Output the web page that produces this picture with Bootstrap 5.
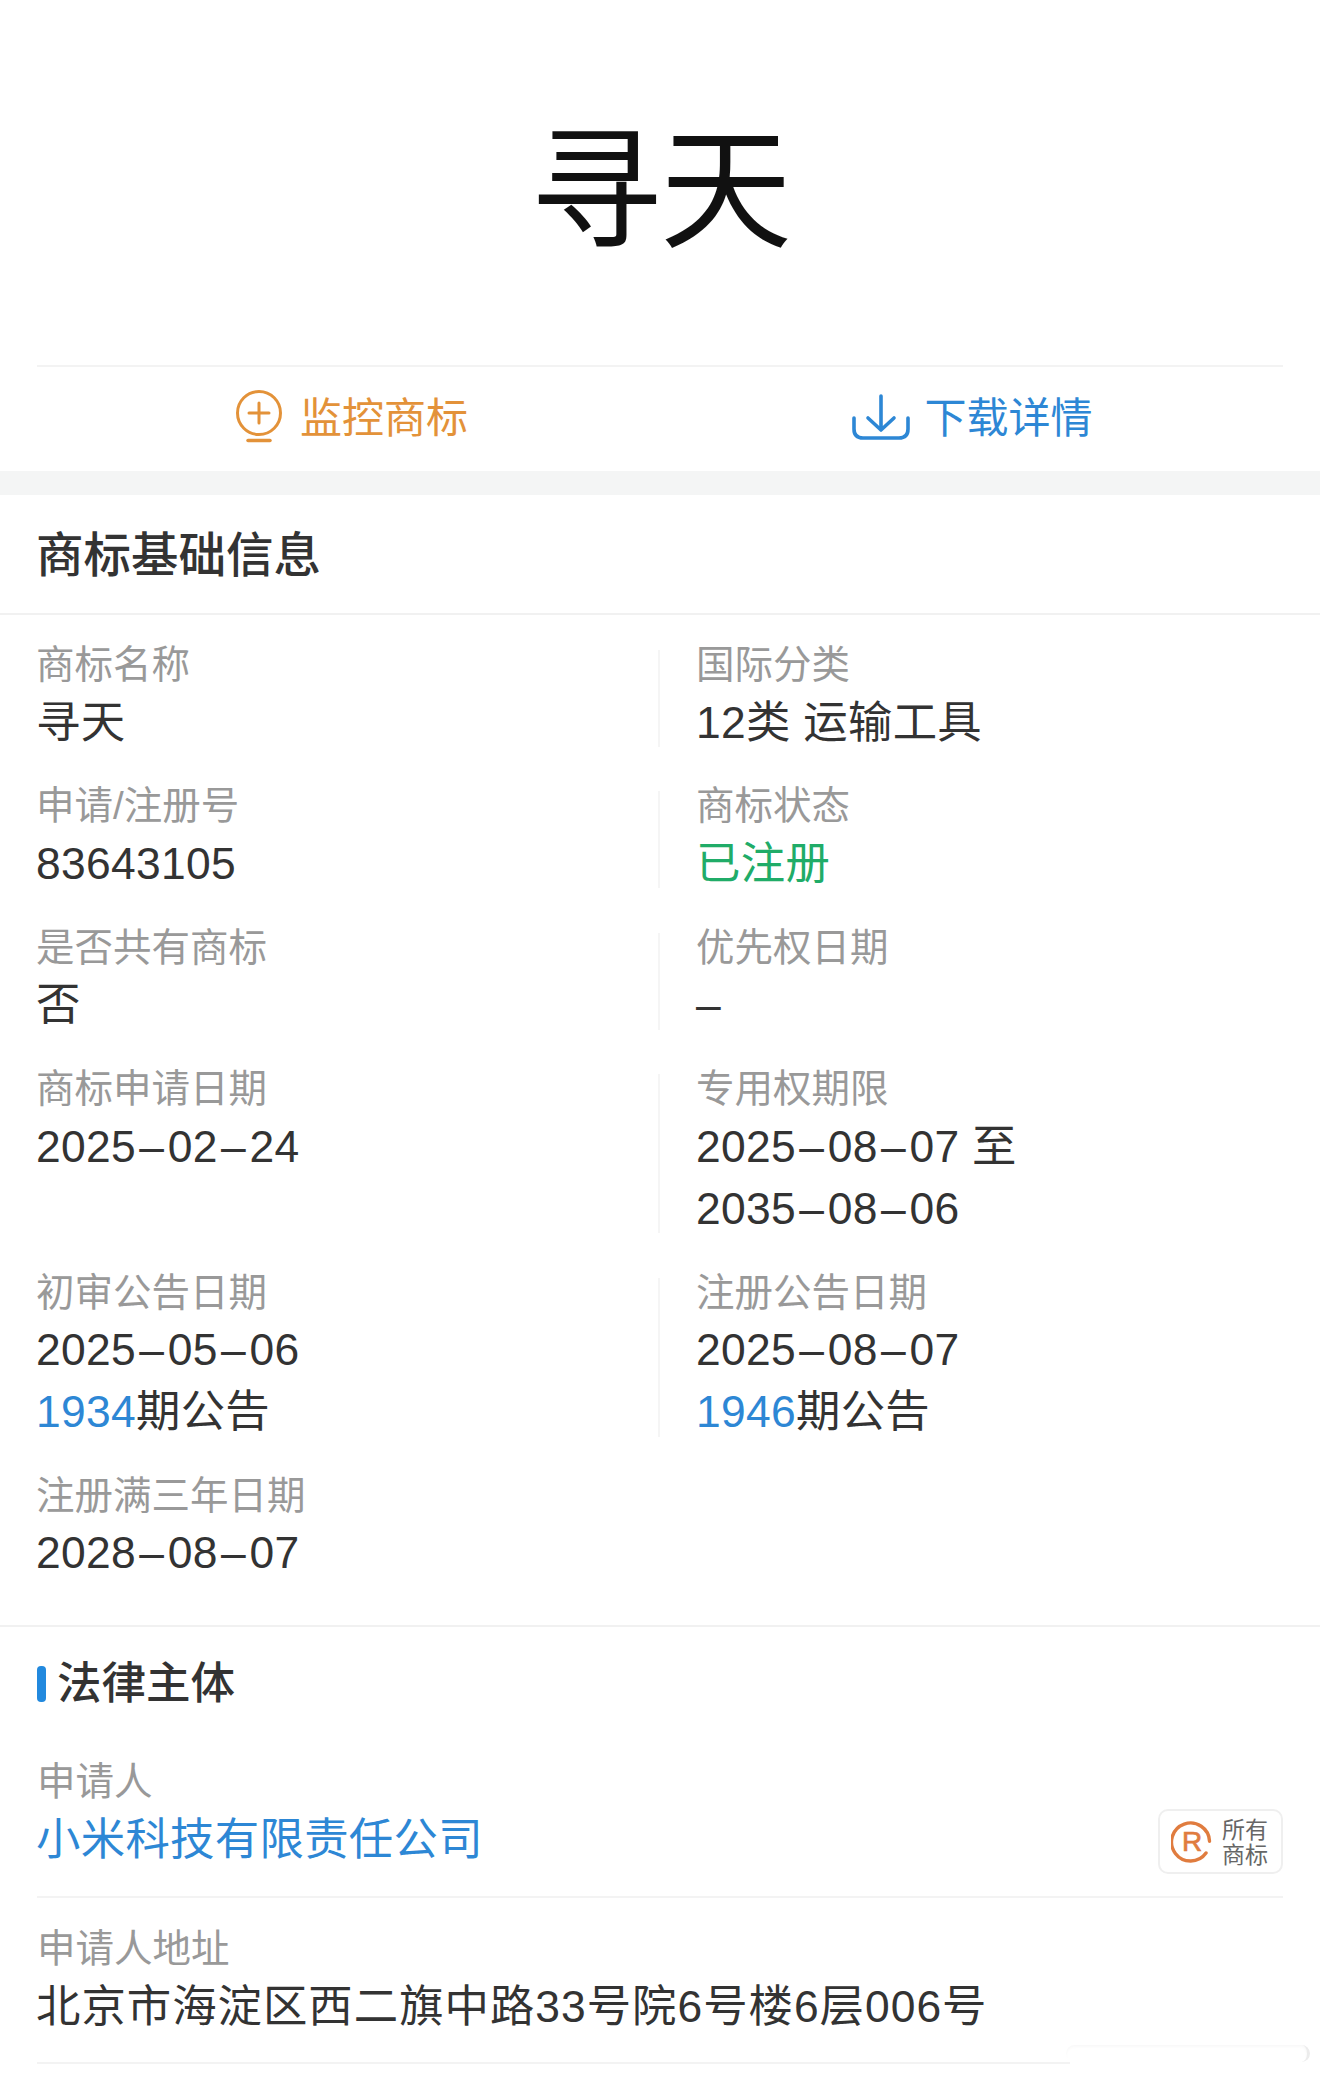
<!DOCTYPE html>
<html lang="zh-CN">
<head>
<meta charset="utf-8">
<title>商标详情</title>
<link href="https://cdn.jsdelivr.net/npm/bootstrap@5.3.0/dist/css/bootstrap.min.css" rel="stylesheet">
<style>
html,body{background:#fff;margin:0;}
body{width:1320px;height:2080px;overflow:hidden;position:relative;font-family:"Liberation Sans","Noto Sans CJK SC",sans-serif;color:#333;}
.hero{height:365px;padding-bottom:6px;}
.hero-title{font-family:"Noto Sans CJK SC",sans-serif;font-size:132px;line-height:1;font-weight:400;color:#111;letter-spacing:-2px;margin:0;}
.pad{margin-left:37px;margin-right:37px;}
.actions{height:106px;border-top:2px solid #f3f3f3;}
.action{font-size:42px;line-height:1;gap:17px;}
.action svg{margin-bottom:4px;}
.action-l{padding-left:6px;}
.action-r{padding-left:2px;}
.action-b{gap:14px;}
.c-orange{color:#e39239;}
.c-blue{color:#2d87d5;}
.c-green{color:#20ac68;}
.band{height:24px;background:#f4f5f5;}
.sec-head{height:120px;border-bottom:2px solid #f1f1f1;padding-left:36px;padding-top:4px;}
.sec-head h2{font-size:47.5px;line-height:1;font-weight:500;color:#333;margin:0;}
.grid{padding:35px 41px 47px 36px;border-bottom:2px solid #f1f1f1;}
.cell{margin-bottom:44.4px;}
.cell-r{border-left:2px solid #f5f5f5;padding-left:36.5px;}
.grid .row>.cell:last-child{margin-bottom:0;}
.lbl{font-size:38.5px;line-height:30px;color:#999;height:30px;}
.val{font-size:44.4px;letter-spacing:.3px;line-height:62px;margin-top:11.5px;margin-bottom:-6.5px;white-space:nowrap;}
.d{margin:0 3.4px;}
.sub-head{height:114px;padding-left:37px;gap:11px;}
.sub-bar{width:9px;height:36px;border-radius:4px;background:#2289de;}
.sub-head h3{font-size:44.5px;line-height:1;font-weight:500;color:#333;margin:0;}
.block{padding-top:13px;}
.block-1{padding-bottom:25px;border-bottom:2px solid #f3f3f3;}
.block-2{padding-top:23.5px;padding-bottom:24px;border-bottom:2px solid #f3f3f3;margin-right:250px;}
.lbl-b{font-size:38.5px;line-height:56px;color:#999;}
.val-b{font-size:44.4px;letter-spacing:.3px;line-height:62px;white-space:nowrap;margin-left:-1px;margin-top:-1px;}
.addr{letter-spacing:1px;}
.own{width:125px;height:65px;border:2px solid #efefef;border-radius:10px;gap:9px;margin-bottom:-3px;color:#666;padding-right:2px;}
.own-t{font-family:"Noto Sans CJK SC",sans-serif;font-size:23px;line-height:25px;}
.own-r{font-family:"Liberation Sans",sans-serif;font-size:28px;font-weight:400;fill:#e07c3f;stroke:#e07c3f;stroke-width:.7px;}
.ghost{position:absolute;left:1066px;top:2045px;width:244px;height:17px;border-radius:9px;border-right:3px solid #ececec;box-shadow:inset 0 2px 3px #f9f9f9;}
</style>
</head>
<body>
<header class="hero d-flex align-items-center justify-content-center">
  <h1 class="hero-title">寻天</h1>
</header>

<section class="pad actions row g-0 align-items-center">
  <div class="col-6 d-flex justify-content-center action-l">
    <a class="action d-flex align-items-center c-orange text-decoration-none">
      <svg width="48" height="54" viewBox="0 0 48 54" fill="none" stroke="#e39239" stroke-width="3" stroke-linecap="round">
        <circle cx="24" cy="23" r="21.5"/>
        <path d="M24 13v20M14 23h20"/>
        <path d="M13 50.5h22" stroke-width="3.5"/>
      </svg>
      <span>监控商标</span>
    </a>
  </div>
  <div class="col-6 d-flex justify-content-center action-r">
    <a class="action action-b d-flex align-items-center c-blue text-decoration-none">
      <svg width="58" height="46" viewBox="0 0 58 46" fill="none" stroke="#2d87d5" stroke-width="3.6" stroke-linecap="round" stroke-linejoin="round">
        <path d="M29 2v34M16 24l13 12 13-12"/>
        <path d="M2 24v11q0 9 9 9h36q9 0 9-9V24"/>
      </svg>
      <span>下载详情</span>
    </a>
  </div>
</section>

<div class="band"></div>

<section class="sec-head d-flex align-items-center">
  <h2>商标基础信息</h2>
</section>

<section class="grid">
  <div class="row g-0">
    <div class="col-6 cell"><div class="lbl">商标名称</div><div class="val">寻天</div></div>
    <div class="col-6 cell cell-r"><div class="lbl">国际分类</div><div class="val">12类&nbsp;运输工具</div></div>

    <div class="col-6 cell"><div class="lbl">申请/注册号</div><div class="val">83643105</div></div>
    <div class="col-6 cell cell-r"><div class="lbl">商标状态</div><div class="val c-green">已注册</div></div>

    <div class="col-6 cell"><div class="lbl">是否共有商标</div><div class="val">否</div></div>
    <div class="col-6 cell cell-r"><div class="lbl">优先权日期</div><div class="val">–</div></div>

    <div class="col-6 cell"><div class="lbl">商标申请日期</div><div class="val">2025<span class="d">–</span>02<span class="d">–</span>24</div></div>
    <div class="col-6 cell cell-r"><div class="lbl">专用权期限</div><div class="val"><div>2025<span class="d">–</span>08<span class="d">–</span>07 至</div><div>2035<span class="d">–</span>08<span class="d">–</span>06</div></div></div>

    <div class="col-6 cell"><div class="lbl">初审公告日期</div><div class="val"><div>2025<span class="d">–</span>05<span class="d">–</span>06</div><div><span class="c-blue">1934</span>期公告</div></div></div>
    <div class="col-6 cell cell-r"><div class="lbl">注册公告日期</div><div class="val"><div>2025<span class="d">–</span>08<span class="d">–</span>07</div><div><span class="c-blue">1946</span>期公告</div></div></div>

    <div class="col-6 cell"><div class="lbl">注册满三年日期</div><div class="val">2028<span class="d">–</span>08<span class="d">–</span>07</div></div>
  </div>
</section>

<section>
  <div class="sub-head d-flex align-items-center">
    <span class="sub-bar"></span>
    <h3>法律主体</h3>
  </div>
  <div class="pad block block-1 d-flex justify-content-between align-items-end">
    <div>
      <div class="lbl-b">申请人</div>
      <div class="val-b c-blue">小米科技有限责任公司</div>
    </div>
    <div class="own d-flex align-items-center justify-content-center">
      <svg width="42" height="44" viewBox="0 0 42 44" fill="none">
        <path d="M36.6 14A19 19 0 1 0 39 26" stroke="#e07c3f" stroke-width="3.4" stroke-linecap="round" transform="rotate(28 21 22)"/>
        <text class="own-r" x="21" y="32" text-anchor="middle">R</text>
      </svg>
      <div class="own-t"><div>所有</div><div>商标</div></div>
    </div>
  </div>
  <div class="pad block block-2">
    <div class="lbl-b">申请人地址</div>
    <div class="val-b addr">北京市海淀区西二旗中路33号院6号楼6层006号</div>
  </div>
</section>

<div class="ghost"></div>
<script src="https://cdn.jsdelivr.net/npm/bootstrap@5.3.0/dist/js/bootstrap.bundle.min.js"></script>
</body>
</html>
